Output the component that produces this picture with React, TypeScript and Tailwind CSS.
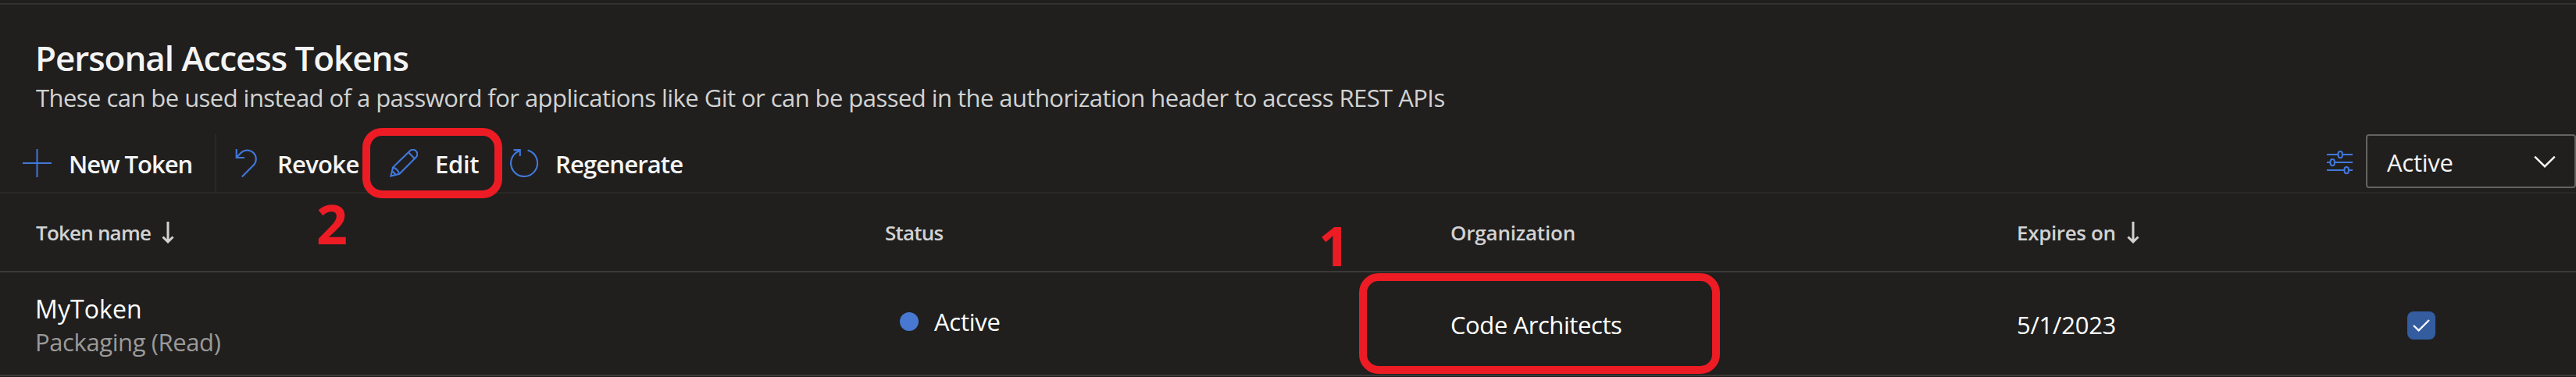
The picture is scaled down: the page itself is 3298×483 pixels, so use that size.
import type { ReactNode } from 'react';

function PlusIcon() {
  return (
    <svg width="37" height="36" viewBox="0 0 37 36" fill="none" stroke="#4178dc" strokeWidth="2">
      <path d="M0 18H37M18.5 0V36" />
    </svg>
  );
}

function UndoIcon() {
  return (
    <svg width="36" height="38" viewBox="0 0 36 38" fill="none" stroke="#4178dc" strokeWidth="2.1">
      <path d="M2.7 1V12H13" />
      <path d="M3 11.5L8.5 5.8A11.3 11.3 0 0 1 24.5 21.8L9.8 36.4" />
    </svg>
  );
}

function PencilIcon() {
  return (
    <svg width="36" height="36" viewBox="0 0 36 36" fill="none" stroke="#4178dc" strokeWidth="2.1" strokeLinejoin="miter">
      <path d="M1.4 34.6L4.2 23.2L25.6 2.4A5.6 5.6 0 0 1 33.6 10.4L12.4 31.8Z" />
      <path d="M24 4.2L31.8 12.2M4.2 23.6C7.5 24.2 11.4 28 12.2 31.6M2.8 28.6C4.6 29.2 6.6 31.2 7.2 33" />
    </svg>
  );
}

function RefreshIcon() {
  return (
    <svg width="36" height="36" viewBox="0 0 36 36" fill="none" stroke="#4178dc" strokeWidth="2.1">
      <path d="M22.6 1.6A17 17 0 1 1 12.6 1.9" />
      <path d="M4.5 1.1H12.8V9" />
    </svg>
  );
}

function SlidersIcon() {
  return (
    <svg width="33" height="36" viewBox="0 0 33 36" fill="none" stroke="#4178dc" strokeWidth="2">
      <path d="M0 8H14.6M20 8H33M0 18H4.6M10 18H33M0 28H22.6M28 28H33" />
      <rect x="14.6" y="4" width="5.2" height="8.2" rx="2.6" />
      <rect x="4.6" y="14" width="5.2" height="8.2" rx="2.6" />
      <rect x="22.6" y="24" width="5.2" height="8.2" rx="2.6" />
    </svg>
  );
}

function SortArrow() {
  return (
    <svg width="16" height="30" viewBox="0 0 16 30" fill="none" stroke="#d2d2d2" strokeWidth="3">
      <path d="M8 1V27M1.5 20.5L8 27L14.5 20.5" />
    </svg>
  );
}

function Command({ icon, className, children }: { icon: ReactNode; className: string; children: ReactNode }) {
  return (
    <button className={`flex h-full shrink-0 items-center text-left text-[31px] leading-[44px] font-semibold text-[#f4f4f4] ${className}`}>
      {icon}
      {children}
    </button>
  );
}

export default function App() {
  return (
    <div className="relative flex h-[483px] w-[3298px] flex-col overflow-hidden bg-[#201f1e] pt-1 font-['Open_Sans','Noto_Sans',sans-serif] whitespace-nowrap">
      <header className="h-[168px] border-t-2 border-[#323130] pt-[39px] pl-[45px]">
        <h1 className="text-[44px] leading-[58px] font-semibold tracking-[-1.05px] text-[#f4f4f4]">Personal Access Tokens</h1>
        <p className="ml-px text-[31px] leading-[44px] tracking-[-0.55px] text-[#d2d2d2]">
          These can be used instead of a password for applications like Git or can be passed in the authorization header to access REST APIs
        </p>
      </header>

      <div className="flex h-[76px] border-b-2 border-[#292827]">
        <Command icon={<PlusIcon />} className="w-[275px] gap-[22px] pl-[29px]">
          <span className="pt-[2px] tracking-[-1px]">New Token</span>
        </Command>
        <div className="w-[2px] bg-[#292827]" />
        <Command icon={<UndoIcon />} className="w-[222px] gap-[19px] pl-[23px]">
          <span className="pt-[2px] tracking-[-0.7px]">Revoke</span>
        </Command>
        <Command icon={<PencilIcon />} className="w-[154px] gap-[22px]">
          <span className="pt-[2px] tracking-[-0.3px]">Edit</span>
        </Command>
        <Command icon={<RefreshIcon />} className="gap-[22px]">
          <span className="pt-[2px] tracking-[-0.85px]">Regenerate</span>
        </Command>
        <div className="ml-auto flex items-start gap-[17px]">
          <div className="pt-[18px]">
            <SlidersIcon />
          </div>
          <button className="flex h-[69px] w-[269px] items-center justify-between rounded-[4px] border-2 border-[#646362] pr-[24px] pl-[25px] text-[31px] leading-[44px] text-[#f4f4f4]">
            <span className="pt-[3px] tracking-[-0.25px]">Active</span>
            <svg width="28" height="16" viewBox="0 0 28 16" fill="none" stroke="#f4f4f4" strokeWidth="2.4">
              <path d="M1.2 1.6L14 14.2L26.8 1.6" />
            </svg>
          </button>
        </div>
      </div>

      <div className="grid h-[101px] grid-cols-[1088px_724px_725px_500px_1fr] items-center border-b-2 border-[#3b3a39] pl-[45px] text-[26px] leading-[36px] font-semibold text-[#d2d2d2]">
        <div className="flex items-center gap-[14px] pl-px">
          <span className="pt-px tracking-[-0.8px]">Token name</span>
          <SortArrow />
        </div>
        <div className="pt-px tracking-[-0.8px]">Status</div>
        <div className="pt-px tracking-[-0.2px]">Organization</div>
        <div className="flex items-center gap-[14px]">
          <span className="pt-px tracking-[-0.35px]">Expires on</span>
          <SortArrow />
        </div>
      </div>

      <div className="grid h-[133px] grid-cols-[1088px_724px_725px_500px_1fr] items-start border-b-2 border-[#3b3a39] pl-[45px] text-[31px] leading-[42px] text-white">
        <div className="pt-[26px]">
          <div className="text-[32px] leading-[42px] tracking-[0.1px]">MyToken</div>
          <div className="tracking-[-0.4px] text-[#9b9a99]">Packaging (Read)</div>
        </div>
        <div className="flex gap-5 pt-[42px] pl-[19px]">
          <div className="mt-[9px] size-6 rounded-full bg-[#4878d2]" />
          <span className="tracking-[-0.25px]">Active</span>
        </div>
        <div className="pt-[46px] tracking-[-0.42px]">Code Architects</div>
        <div className="pt-[46px] tracking-[-0.25px]">5/1/2023</div>
        <div className="pt-[50px]">
          <div className="flex size-9 items-center justify-center rounded-[8px] bg-[#345da0]">
            <svg width="22" height="16" viewBox="0 0 22 16" fill="none" stroke="#ffffff" strokeWidth="2.2">
              <path d="M1 8L7.6 14.4L21 1" />
            </svg>
          </div>
        </div>
      </div>

      <div className="absolute top-[164px] left-[464px] h-[90px] w-[179px] rounded-[25px] border-10 border-[#ed1c24]" />
      <div className="absolute top-[350px] left-[1740px] h-[129px] w-[462px] rounded-[25px] border-10 border-[#ed1c24]" />
      <div className="absolute top-[251px] left-[405px] text-[70px] leading-none font-bold text-[#ed1c24]">2</div>
      <div className="absolute top-[279px] left-[1688px] text-[70px] leading-none font-bold text-[#ed1c24]">1</div>
    </div>
  );
}
